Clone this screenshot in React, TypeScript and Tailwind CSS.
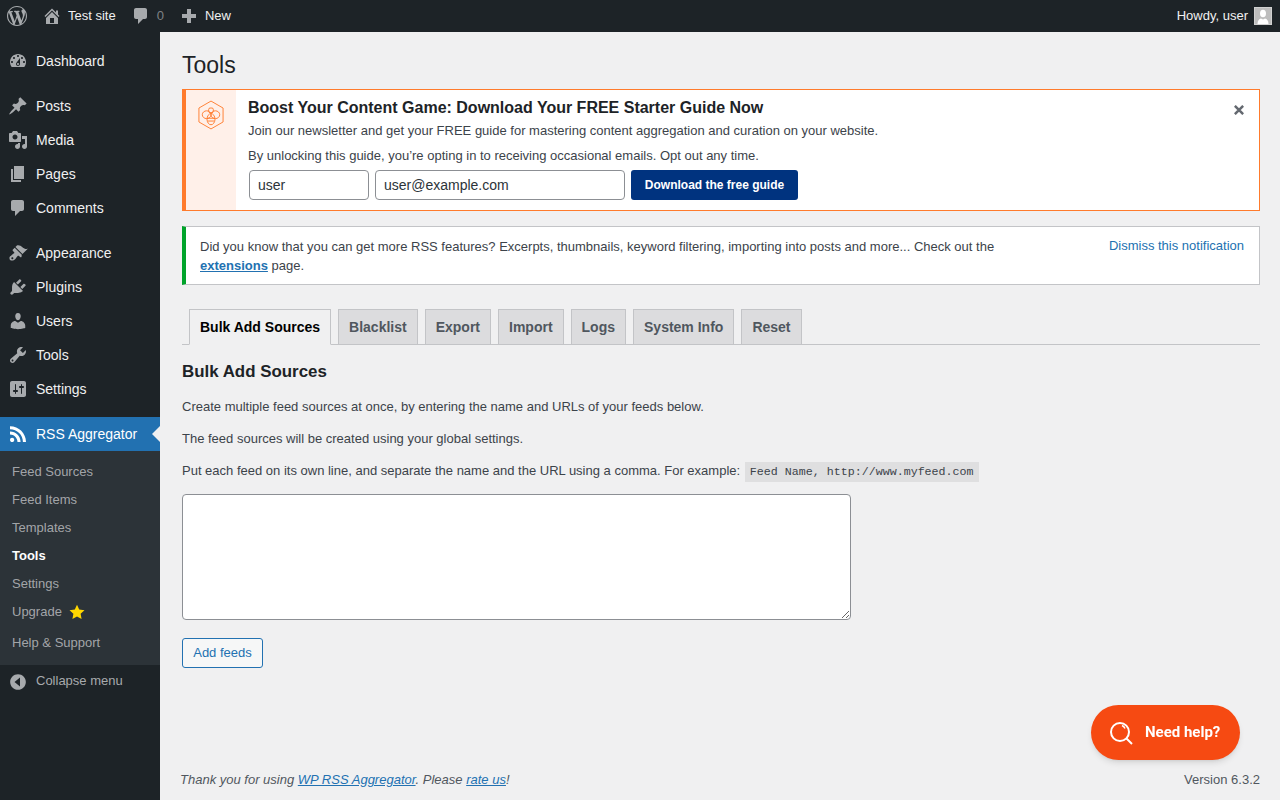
import { Fragment } from "react";

type IconProps = { d: string; className: string };

function Dash({ d, className }: IconProps) {
  return (
    <svg viewBox="0 0 20 20" className={className} fill="currentColor" fillRule="evenodd">
      <path d={d} />
    </svg>
  );
}

const icons = {
  wp: "M20 10c0-5.51-4.49-10-10-10C4.48 0 0 4.49 0 10c0 5.52 4.48 10 10 10 5.51 0 10-4.48 10-10zM7.78 15.37L4.37 6.22c.55-.02 1.17-.08 1.17-.08.5-.06.44-1.13-.06-1.11 0 0-1.45.11-2.37.11-.18 0-.37 0-.58-.01C4.12 2.69 6.87 1.11 10 1.11c2.33 0 4.45.87 6.05 2.34-.68-.11-1.65.39-1.65 1.58 0 .74.45 1.36.9 2.1.35.61.55 1.36.55 2.46 0 1.49-1.4 5-1.4 5l-3.03-8.37c.54-.02.82-.17.82-.17.5-.05.44-1.25-.06-1.22 0 0-1.44.12-2.38.12-.87 0-2.33-.12-2.33-.12-.5-.03-.56 1.2-.06 1.22l.92.08 1.26 3.41zM17.41 10c.24-.64.74-1.87.43-4.25.7 1.29 1.05 2.71 1.05 4.25 0 3.29-1.73 6.24-4.4 7.78.97-2.59 1.94-5.2 2.92-7.78zM6.1 18.09C3.12 16.65 1.11 13.53 1.11 10c0-1.3.23-2.48.72-3.59C3.25 10.3 4.67 14.2 6.1 18.09zm4.03-6.63l2.58 6.98c-.86.29-1.76.45-2.71.45-.79 0-1.57-.11-2.29-.33.81-2.38 1.62-4.74 2.42-7.1z",
  home: "M16 8.5l1.53 1.53-1.06 1.06L10 4.62l-6.47 6.47-1.06-1.06L10 2.5l4 4v-2h2v4zm-6-2.46l6 5.99V18H4v-5.97zM12 17v-5H8v5h4z",
  comment: "M5 2h9c1.1 0 2 .9 2 2v7c0 1.1-.9 2-2 2h-2l-5 5v-5H5c-1.1 0-2-.9-2-2V4c0-1.1.9-2 2-2z",
  plus: "M8 3h4v5h5v4h-5v5H8v-5H3V8h5z",
  dashboard: "M3.76 16h12.48c1.1-1.37 1.76-3.11 1.76-5 0-4.42-3.58-8-8-8s-8 3.58-8 8c0 1.89.66 3.63 1.76 5zM10 4c.55 0 1 .45 1 1s-.45 1-1 1-1-.45-1-1 .45-1 1-1zM6 6c.55 0 1 .45 1 1s-.45 1-1 1-1-.45-1-1 .45-1 1-1zm8 0c.55 0 1 .45 1 1s-.45 1-1 1-1-.45-1-1 .45-1 1-1zm-5.37 5.55L12 7v6c0 1.1-.9 2-2 2s-2-.9-2-2c0-.57.24-1.08.63-1.45zM4 10c.55 0 1 .45 1 1s-.45 1-1 1-1-.45-1-1 .45-1 1-1zm12 0c.55 0 1 .45 1 1s-.45 1-1 1-1-.45-1-1 .45-1 1-1zm-5 3c0-.55-.45-1-1-1s-1 .45-1 1 .45 1 1 1 1-.45 1-1z",
  post: "M10.44 3.02l1.82-1.82 6.36 6.35-1.83 1.82c-1.05-.68-2.48-.57-3.41.36l-.75.75c-.92.93-1.04 2.35-.35 3.41l-1.83 1.82-2.41-2.41-2.8 2.79c-.42.42-3.38 2.71-3.8 2.29s1.86-3.39 2.28-3.81l2.79-2.79L4.1 9.36l1.83-1.82c1.05.69 2.48.57 3.4-.36l.75-.75c.93-.92 1.05-2.35.36-3.41z",
  media: "M13 11V4c0-.55-.45-1-1-1h-1.67L9 1H5L3.67 3H2c-.55 0-1 .45-1 1v7c0 .55.45 1 1 1h10c.55 0 1-.45 1-1zM7 4.5c1.38 0 2.5 1.12 2.5 2.5S8.38 9.5 7 9.5 4.5 8.38 4.5 7 5.62 4.5 7 4.5zM14 6h5v10.5c0 1.38-1.12 2.5-2.5 2.5S14 17.88 14 16.5s1.12-2.5 2.5-2.5c.17 0 .34.02.5.05V9h-3V6zm-4 8.05V13h2v3.5c0 1.38-1.12 2.5-2.5 2.5S7 17.88 7 16.5 8.12 14 9.5 14c.17 0 .34.02.5.05z",
  page: "M6 15V2h10v13H6zm-1 1h8v2H3V5h2v11z",
  appearance: "M14.48 11.06L7.41 3.99l1.5-1.5c.5-.56 2.3-.47 3.51.32 1.21.8 1.43 1.28 2.91 2.1 1.18.64 2.45 1.26 4.45.85zm-.71.71L6.7 4.7 4.93 6.47c-.39.39-.39 1.02 0 1.41l1.06 1.06c.39.39.39 1.03 0 1.42-.6.6-1.43 1.11-2.21 1.69-.35.26-.7.53-1.01.84C1.43 13.23 1 15.16 2 17c1.84 1 3.77.57 5.1-.77.31-.31.58-.66.84-1.01.58-.78 1.09-1.61 1.69-2.21.39-.39 1.02-.39 1.41 0l1.06 1.06c.39.39 1.02.39 1.41 0zM5.05 15.95c-.39.39-1.02.39-1.41 0s-.39-1.02 0-1.41 1.02-.39 1.41 0 .39 1.02 0 1.41z",
  plugins: "M13.11 4.36L9.87 7.6 8 5.73l3.24-3.24c.35-.34 1.05-.2 1.56.32.52.51.66 1.21.31 1.55zm-8 1.77l.91-1.12 9.01 9.01-1.19.84c-.71.71-2.63 1.16-3.82 1.16H6.14L4.9 17.26c-.59.59-1.54.59-2.12 0-.59-.58-.59-1.53 0-2.12l1.24-1.24v-3.88c0-1.13.4-3.19 1.09-3.89zm7.26 3.97l3.24-3.24c.34-.35 1.04-.21 1.55.31.52.51.66 1.21.31 1.55l-3.24 3.25z",
  users: "M10 9.25c-2.27 0-2.73-3.44-2.73-3.44C7 4.02 7.82 2 9.97 2c2.16 0 2.98 2.02 2.71 3.81 0 0-.41 3.44-2.68 3.44zm0 2.57L12.72 10c2.39 0 4.52 2.33 4.52 4.53v2.49s-3.65 1.13-7.24 1.13c-3.65 0-7.24-1.13-7.24-1.13v-2.49c0-2.25 1.94-4.48 4.47-4.48z",
  tools: "M16.68 9.77c-1.34 1.34-3.3 1.67-4.95.99l-5.41 6.52c-.99.99-2.59.99-3.58 0s-.99-2.59 0-3.57l6.52-5.42c-.68-1.65-.35-3.61.99-4.95 1.28-1.28 3.12-1.62 4.72-1.06l-2.89 2.89 2.82 2.82 2.86-2.87c.53 1.58.18 3.39-1.08 4.65zM3.81 16.21c.4.39 1.04.39 1.43 0 .4-.4.4-1.04 0-1.44-.39-.39-1.03-.39-1.43 0-.39.4-.39 1.04 0 1.44z",
  settings: "M18 16V4c0-1.1-.9-2-2-2H4c-1.1 0-2 .9-2 2v12c0 1.1.9 2 2 2h12c1.1 0 2-.9 2-2zM8 11h1c.55 0 1 .45 1 1s-.45 1-1 1H8v1.5c0 .28-.22.5-.5.5s-.5-.22-.5-.5V13H6c-.55 0-1-.45-1-1s.45-1 1-1h1V5.5c0-.28.22-.5.5-.5s.5.22.5.5V11zm5-2h-1c-.55 0-1-.45-1-1s.45-1 1-1h1V5.5c0-.28.22-.5.5-.5s.5.22.5.5V7h1c.55 0 1 .45 1 1s-.45 1-1 1h-1v5.5c0 .28-.22.5-.5.5s-.5-.22-.5-.5V9z",
  rss: "M14.92 18H18C18 9.32 10.82 2.25 2 2.25v3.02c7.12 0 12.92 5.71 12.92 12.73zm-5.44 0h3.08C12.56 12.27 7.82 7.6 2 7.6v3.02c2 0 3.87.77 5.29 2.16C8.7 14.17 9.48 16.03 9.48 18zm-5.35-.02c1.17 0 2.13-.93 2.13-2.09 0-1.15-.96-2.09-2.13-2.09-1.18 0-2.13.94-2.13 2.09 0 1.16.95 2.09 2.13 2.09z",
  collapse: "M10 2.16c4.33 0 7.84 3.51 7.84 7.84s-3.51 7.84-7.84 7.84-7.84-3.51-7.84-7.84S5.67 2.16 10 2.16zM12 5.500L6.500 10l5.500 4.500z",
};

const menuGroups = [
  [{ label: "Dashboard", icon: icons.dashboard }],
  [
    { label: "Posts", icon: icons.post },
    { label: "Media", icon: icons.media },
    { label: "Pages", icon: icons.page },
    { label: "Comments", icon: icons.comment },
  ],
  [
    { label: "Appearance", icon: icons.appearance },
    { label: "Plugins", icon: icons.plugins },
    { label: "Users", icon: icons.users },
    { label: "Tools", icon: icons.tools },
    { label: "Settings", icon: icons.settings },
  ],
];

const subItems = ["Feed Sources", "Feed Items", "Templates", "Tools", "Settings"];
const tabs = ["Blacklist", "Export", "Import", "Logs", "System Info", "Reset"];

function BeeLogo() {
  return (
    <svg viewBox="0 0 28 32" className="w-[26px] h-[30px]" fill="none" stroke="#ff7b2c" strokeWidth="1">
      <path d="M14 1L27 8.500V23.500L14 31L1 23.500V8.500Z" />
      <ellipse cx="9.300" cy="15.700" rx="4.700" ry="4.200" />
      <ellipse cx="18.700" cy="15.700" rx="4.700" ry="4.200" />
      <rect x="11.500" y="8.500" width="5" height="5" rx="1.500" />
      <ellipse cx="14" cy="20.500" rx="4.300" ry="6" />
      <path d="M10 19.500H18M10.500 22.500H17.500" />
    </svg>
  );
}

export default function App() {
  return (
    <div className="flex flex-col w-[1280px] h-[800px] overflow-hidden bg-[#f0f0f1] text-[13px] text-[#3c434a] font-['Liberation_Sans',Arial,sans-serif]">
      <header className="flex items-center justify-between h-8 bg-[#1d2327] text-[#f0f0f1] pr-2 shrink-0">
        <div className="flex items-center">
          <Dash d={icons.wp} className="w-5 h-5 ml-[7px] text-[#a7aaad]" />
          <Dash d={icons.home} className="w-5 h-5 ml-[15px] text-[#a7aaad]" />
          <span className="ml-[6px]">Test site</span>
          <Dash d={icons.comment} className="w-5 h-5 ml-[15px] text-[#a7aaad]" />
          <span className="ml-[6px] text-[#a7aaad] opacity-70">0</span>
          <Dash d={icons.plus} className="w-5 h-5 ml-[15px] text-[#a7aaad]" />
          <span className="ml-[6px]">New</span>
        </div>
        <div className="flex items-center">
          <span>Howdy, user</span>
          <div className="flex items-end justify-center w-[18px] h-[18px] ml-[6px] bg-[#bdbdbd] border border-[#d0d0d0] overflow-hidden">
            <svg viewBox="0 0 16 16" className="w-4 h-4" fill="#fff">
              <ellipse cx="8" cy="5.500" rx="3" ry="3.800" />
              <path d="M2.500 16c0-3.500 1.500-5 3.500-5.500l2 1 2-1c2 .5 3.500 2 3.500 5.500z" />
            </svg>
          </div>
        </div>
      </header>

      <div className="flex flex-1 min-h-0">
        <aside className="w-40 shrink-0 bg-[#1d2327] pt-3 text-[14px] text-[#f0f0f1]">
          {menuGroups.map((group, i) => (
            <Fragment key={i}>
              {group.map((item) => (
                <div key={item.label} className="flex items-center h-[34px]">
                  <Dash d={item.icon} className="w-5 h-5 ml-2 text-[#a7aaad]" />
                  <span className="ml-2">{item.label}</span>
                </div>
              ))}
              <div className="h-[11px]" />
            </Fragment>
          ))}

          <div className="relative flex items-center h-[34px] bg-[#2271b1] text-white">
            <Dash d={icons.rss} className="w-5 h-5 ml-2 text-white" />
            <span className="ml-2">RSS Aggregator</span>
            <div className="absolute right-0 top-[9px] border-y-8 border-r-8 border-y-transparent border-r-[#f0f0f1]" />
          </div>

          <div className="h-[214px] bg-[#2c3338] pt-[7px] text-[13px] text-[#c3c4c7]/80">
            {subItems.map((item) => (
              <div
                key={item}
                className={item === "Tools" ? "flex items-center h-7 pl-3 font-semibold text-white" : "flex items-center h-7 pl-3"}
              >
                {item}
              </div>
            ))}
            <div className="flex items-center h-7 pl-3">
              Upgrade
              <svg viewBox="0 0 16 16" className="w-4 h-4 ml-[7px]" fill="#ffd700">
                <path d="M8 .7l2.200 4.900 5.300.6-3.900 3.600 1 5.300L8 12.500l-4.600 2.600 1-5.300L.5 6.200l5.300-.6z" />
              </svg>
            </div>
            <div className="flex items-center h-7 pl-3 mt-[3px]">Help & Support</div>
          </div>

          <div className="flex items-center h-[32px] text-[13px] text-[#a7aaad]">
            <Dash d={icons.collapse} className="w-5 h-5 ml-2 mt-[2px]" />
            <span className="ml-2">Collapse menu</span>
          </div>
        </aside>

        <main className="flex-1 flex flex-col min-w-0 pl-[22px] pr-5">
          <h1 className="mt-[18px] mb-[9px] text-[23px] leading-[30px] text-[#1d2327]">Tools</h1>

          <section className="flex h-[122px] bg-white border border-[#ff7b2c] border-l-4">
            <div className="flex justify-center w-[50px] bg-[#fff0e9] pt-[10px] shrink-0">
              <BeeLogo />
            </div>
            <div className="flex-1 pl-3 pt-[8px]">
              <h3 className="text-[16px] leading-[20px] font-bold text-[#1d2327]">
                Boost Your Content Game: Download Your FREE Starter Guide Now
              </h3>
              <p className="mt-[3px] leading-[19px]">
                Join our newsletter and get your FREE guide for mastering content aggregation and curation on your website.
              </p>
              <p className="mt-[6px] leading-[19px]">
                By unlocking this guide, you’re opting in to receiving occasional emails. Opt out any time.
              </p>
              <div className="flex items-center gap-[6px] mt-[5px] ml-px">
                <input
                  readOnly
                  value="user"
                  className="w-[120px] h-[30px] px-2 text-[14px] text-[#2c3338] bg-white border border-[#8c8f94] rounded"
                />
                <input
                  readOnly
                  value="user@example.com"
                  className="w-[250px] h-[30px] px-2 text-[14px] text-[#2c3338] bg-white border border-[#8c8f94] rounded"
                />
                <button className="w-[167px] h-[30px] text-[12px] font-bold text-white bg-[#00337f] rounded-[3px]">
                  Download the free guide
                </button>
              </div>
            </div>
            <svg viewBox="0 0 12 12" className="w-[10px] h-[10px] mt-[15px] mr-[15px] shrink-0" stroke="#646970" strokeWidth="3">
              <path d="M1 1L11 11M11 1L1 11" />
            </svg>
          </section>

          <section className="flex justify-between h-[59px] mt-[15px] bg-white border border-[#c3c4c7] border-l-4 border-l-[#00a32a] pl-[14px] pr-[15px] pt-[10px] leading-[19px]">
            <p className="w-[810px]">
              Did you know that you can get more RSS features? Excerpts, thumbnails, keyword filtering, importing into posts and more... Check out the{" "}
              <a className="font-bold underline text-[#2271b1]">extensions</a> page.
            </p>
            <a className="-mt-px text-[#2271b1]">Dismiss this notification</a>
          </section>

          <nav className="flex gap-[7px] h-9 mt-6 pl-[7px] border-b border-[#c3c4c7] text-[14px] font-bold leading-[34px]">
            <div className="h-9 px-[10px] bg-[#f0f0f1] border border-[#c3c4c7] border-b-[#f0f0f1] text-black">
              Bulk Add Sources
            </div>
            {tabs.map((tab) => (
              <div key={tab} className="h-[35px] px-[10px] bg-[#dcdcde] border border-[#c3c4c7] border-b-0 text-[#50575e]">
                {tab}
              </div>
            ))}
          </nav>

          <h2 className="mt-4 text-[16.9px] leading-[22px] font-bold text-[#1d2327]">Bulk Add Sources</h2>
          <p className="mt-[14px] leading-[19px]">
            Create multiple feed sources at once, by entering the name and URLs of your feeds below.
          </p>
          <p className="mt-[13px] leading-[19px]">The feed sources will be created using your global settings.</p>
          <p className="mt-[13px] leading-[19px]">
            Put each feed on its own line, and separate the name and the URL using a comma. For example:{" "}
            <code className="ml-px px-[5px] py-[3px] bg-black/[0.07] text-[11.67px] font-['Liberation_Mono',monospace]">
              Feed Name, http://www.myfeed.com
            </code>
          </p>
          <textarea readOnly className="block w-[669px] h-[126px] mt-3 bg-white border border-[#8c8f94] rounded" />
          <button className="w-[81px] h-[30px] mt-[18px] text-[#2271b1] bg-[#f6f7f7] border border-[#2271b1] rounded-[3px]">
            Add feeds
          </button>

          <footer className="flex justify-between mt-auto mb-[11px] -ml-[2px] leading-[19px]">
            <p className="italic text-[#50575e]">
              Thank you for using <a className="underline text-[#2271b1]">WP RSS Aggregator</a>. Please{" "}
              <a className="underline text-[#2271b1]">rate us</a>!
            </p>
            <p className="text-[#50575e]">Version 6.3.2</p>
          </footer>
        </main>
      </div>

      <button className="fixed right-10 bottom-10 flex items-center w-[149px] h-[55px] pl-[18px] bg-[#f64a12] text-white rounded-[28px] shadow-md font-['Roboto',sans-serif] text-[15px] font-bold">
        <svg viewBox="0 0 24 24" className="w-6 h-6" fill="none" stroke="#fff" strokeWidth="2">
          <circle cx="11" cy="11" r="9" />
          <path d="M17.500 17.500L23 23" />
          <path d="M13 4.500a6 6 0 0 1 3 3" strokeWidth="1.500" />
        </svg>
        <span className="ml-3">Need help?</span>
      </button>
    </div>
  );
}
